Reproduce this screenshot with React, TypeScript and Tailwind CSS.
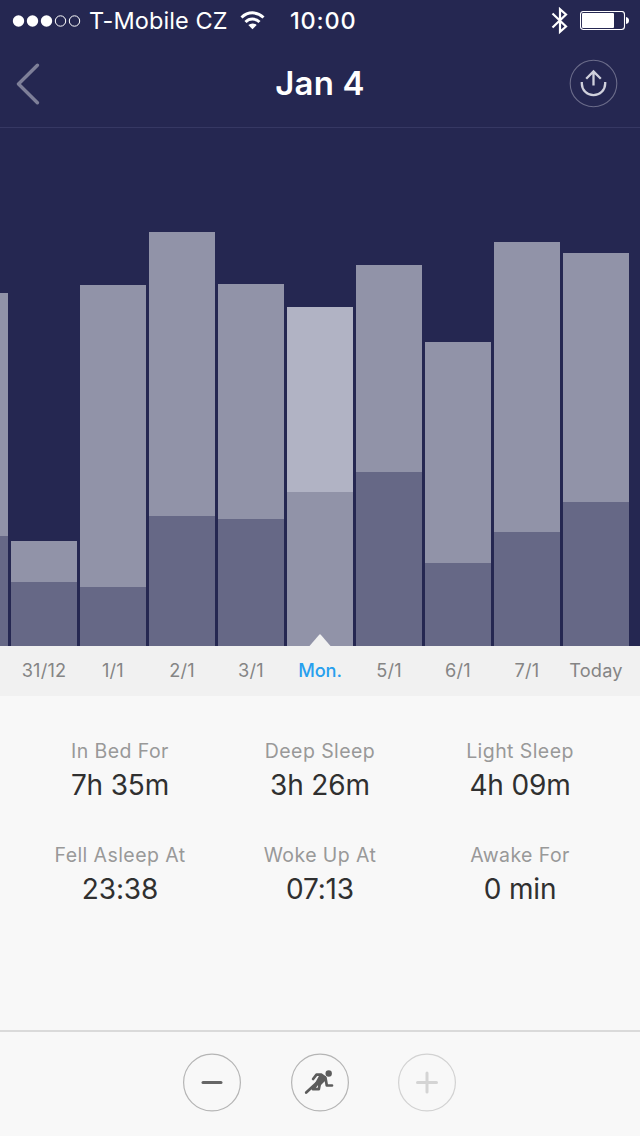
import React from "react";

type Night = { label: string; height: number; deep: number; selected?: boolean };

const nights: Night[] = [
  { label: "31/12", height: 105, deep: 64 },
  { label: "1/1", height: 361, deep: 59 },
  { label: "2/1", height: 414, deep: 130 },
  { label: "3/1", height: 362, deep: 127 },
  { label: "Mon.", height: 339, deep: 154, selected: true },
  { label: "5/1", height: 381, deep: 174 },
  { label: "6/1", height: 304, deep: 83 },
  { label: "7/1", height: 404, deep: 114 },
  { label: "Today", height: 393, deep: 144 },
];

const stats = [
  { label: "In Bed For", value: "7h 35m" },
  { label: "Deep Sleep", value: "3h 26m" },
  { label: "Light Sleep", value: "4h 09m" },
  { label: "Fell Asleep At", value: "23:38" },
  { label: "Woke Up At", value: "07:13" },
  { label: "Awake For", value: "0 min" },
];

function StatusBar() {
  return (
    <div className="flex h-10 items-center pl-3 pr-[11px] pt-px">
      <svg width="69" height="12" viewBox="0 0 69 12" fill="#fff">
        <circle cx="6.500" cy="6" r="5.700" />
        <circle cx="20.500" cy="6" r="5.700" />
        <circle cx="34.500" cy="6" r="5.700" />
        <circle cx="48.500" cy="6" r="5.200" fill="none" stroke="#fff" />
        <circle cx="62.500" cy="6" r="5.200" fill="none" stroke="#fff" />
      </svg>
      <span className="ml-2 w-[139px] whitespace-nowrap text-[23.5px] leading-10 tracking-[0.1px]">T-Mobile CZ</span>
      <svg className="ml-3" width="26" height="19" viewBox="0 0 26 19" fill="none" stroke="#fff" strokeWidth="3">
        <path d="M1.500 6.500C8 .3 17 .3 23.500 6.500" />
        <path d="M5.500 11C9.500 7.100 15.500 7.100 19.500 11" />
        <path d="M12.500 18.300L8.300 14Q12.500 10.800 16.700 14Z" fill="#fff" stroke="none" />
      </svg>
      <span className="ml-6 whitespace-nowrap text-[23.5px] font-medium leading-10 tracking-[0.85px]">10:00</span>
      <svg className="ml-auto" width="18" height="28" viewBox="0 0 18 28" fill="none" stroke="#fff" strokeWidth="2.200">
        <path d="M1.500 6.500L15 19.500L9 24.800V2.200L15 7.500L1.500 20.500" />
      </svg>
      <svg className="ml-[11px]" width="49" height="20" viewBox="0 0 49 20" fill="#fff">
        <rect x=".5" y=".5" width="44" height="18" rx="3" fill="none" stroke="#fff" strokeWidth="1.100" />
        <rect x="2" y="2" width="32" height="15" rx="1" />
        <path d="M46 6Q49 6.500 49 9.500T46 13Z" />
      </svg>
    </div>
  );
}

function Header() {
  return (
    <div className="flex h-[88px] items-center justify-between border-b border-[#363863] pl-4 pr-[22px]">
      <button className="flex w-[49px]" aria-label="Back">
        <svg width="24" height="42" viewBox="0 0 24 42" fill="none" stroke="#7e7f98" strokeWidth="3.400" strokeLinecap="round" strokeLinejoin="round">
          <path d="M21.400 2.200L2.500 21L21.400 39.800" />
        </svg>
      </button>
      <h1 className="-mt-0.5 pl-1.5 text-[33px] font-semibold leading-10 tracking-[0.15px]">Jan 4</h1>
      <button className="flex" aria-label="Share">
        <svg width="49" height="49" viewBox="0 0 49 49" fill="none" stroke="#d0d1dc" strokeWidth="2.300">
          <circle cx="24.500" cy="24.500" r="23.300" stroke="#6b6c8a" strokeWidth="1.100" />
          <path d="M12.800 23v1.500a11.700 11.700 0 0 0 23.400 0v-1.500M24.500 26.500V12.500M17.200 19.700L24.500 12.400L31.800 19.700" />
        </svg>
      </button>
    </div>
  );
}

function Bar({ night }: { night: Night }) {
  return (
    <div
      className={`relative flex w-[66px] shrink-0 flex-col ${night.selected ? "bg-[#b1b3c4]" : "bg-[#9193a8]"}`}
      style={{ height: night.height }}
    >
      <div className={`mt-auto ${night.selected ? "bg-[#9193a8]" : "bg-[#666886]"}`} style={{ height: night.deep }} />
      {night.selected && (
        <svg className="absolute bottom-0 left-[22px]" width="22" height="12" viewBox="0 0 22 12" fill="#f1f1f1">
          <path d="M.5 12L10.200 .7Q11 0 11.800 .7L21.500 12Z" />
        </svg>
      )}
    </div>
  );
}

function RoundButton({ label, faint, children }: { label: string; faint?: boolean; children: React.ReactNode }) {
  return (
    <button aria-label={label} className="flex">
      <svg width="58" height="59" viewBox="0.5 0 58 59" fill="none">
        <circle cx="29.500" cy="29.500" r="28.400" stroke={faint ? "#d2d2d2" : "#b5b5b5"} strokeWidth="1.200" />
        {children}
      </svg>
    </button>
  );
}

export default function App() {
  return (
    <main className="flex h-[1136px] w-[640px] flex-col overflow-hidden bg-[#f8f8f8] font-['Inter',sans-serif]">
      <header className="bg-[#252751] text-white">
        <StatusBar />
        <Header />
      </header>
      <section className="flex h-[518px] items-end gap-[3px] overflow-hidden bg-[#252751]">
        <div className="flex h-[353px] w-2 shrink-0 flex-col bg-[#9193a8]">
          <div className="mt-auto h-[110px] bg-[#666886]" />
        </div>
        {nights.map((n) => (
          <Bar key={n.label} night={n} />
        ))}
      </section>
      <nav className="flex h-[50px] gap-[3px] bg-[#f1f1f1] pl-[11px] text-[18.200px] leading-[49px] tracking-[0.2px] text-[#858585]">
        {nights.map((n) => (
          <span
            key={n.label}
            className={`w-[66px] shrink-0 text-center ${n.selected ? "font-medium tracking-[-0.1px] text-[#279fee]" : ""}`}
          >
            {n.label}
          </span>
        ))}
      </nav>
      <section className="grid grid-cols-[200px_200px_200px] gap-y-8 px-5 pt-[38px] text-center">
        {stats.map((s) => (
          <div key={s.label} className="h-[72px]">
            <p className="text-[19.500px] leading-[34px] tracking-[0.420px] text-[#999]">{s.label}</p>
            <p className="text-[28px] leading-[34px] tracking-[-0.150px] text-[#303030]">{s.value}</p>
          </div>
        ))}
      </section>
      <footer className="mt-auto flex h-[106px] gap-[49.500px] border-t-2 border-[#dadada] pl-[183px] pt-[21px]">
        <RoundButton label="Decrease">
          <path d="M20.500 29.500H38.500" stroke="#666" strokeWidth="3" strokeLinecap="round" />
        </RoundButton>
        <RoundButton label="Activity">
          <circle cx="38.200" cy="20.500" r="3.200" fill="#5c5c5c" />
          <path d="M29.500 21L35.500 23.500L34.500 28L30.500 32L28 33L24.500 30Z" fill="#5c5c5c" />
          <path
            d="M22.600 26L26 21.700H31L35 24.900L36.300 32.500H41.500M25.500 30.500L15.700 39.500M29.500 30L28.300 36.200H22.500L26 32"
            stroke="#5c5c5c"
            strokeWidth="2.700"
            strokeLinecap="round"
            strokeLinejoin="round"
          />
        </RoundButton>
        <RoundButton label="Increase" faint>
          <path d="M20 29.500H39M29.500 20V39" stroke="#d4d4d4" strokeWidth="3" strokeLinecap="round" />
        </RoundButton>
      </footer>
    </main>
  );
}
